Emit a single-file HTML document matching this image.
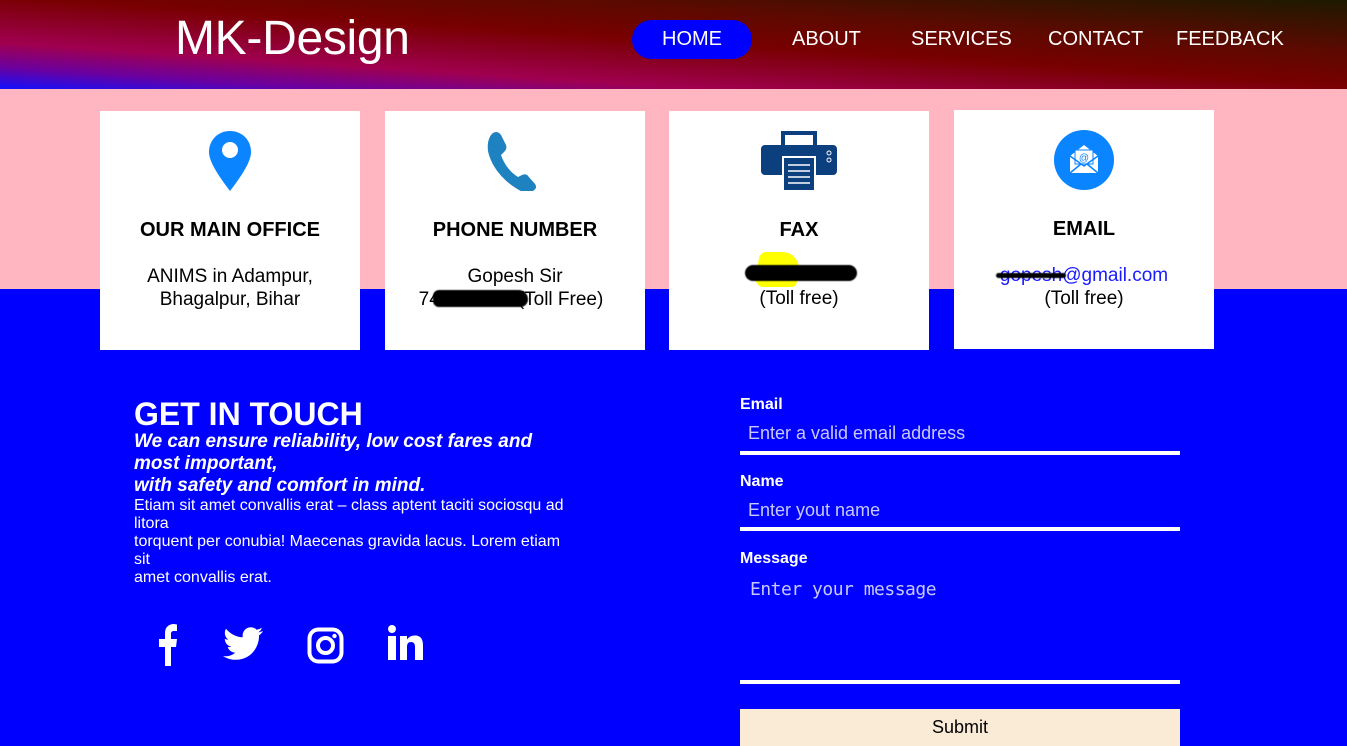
<!DOCTYPE html>
<html><head><meta charset="utf-8"><style>
*{margin:0;padding:0;box-sizing:border-box}
html,body{width:1347px;height:746px;overflow:hidden;font-family:"Liberation Sans",Arial,sans-serif}
body{background:#0000ff;position:relative}
.hdr{position:absolute;left:0;top:0;width:1347px;height:89px;background:linear-gradient(to top right,#1010ff 0%,#6a00a0 12%,#a0004f 26%,#780000 52%,#5a0a00 72%,#1c1a00 100%)}
.logo{position:absolute;left:175px;top:11px;color:#fff;font-size:48px;letter-spacing:-0.3px}
.nav a{position:absolute;top:28px;color:#fff;font-size:20px;text-decoration:none;line-height:22px}
.home{left:632px!important;top:20px!important;width:120px;height:39px;background:#00f;border-radius:20px;text-align:center;line-height:39px!important}
.pink{position:absolute;left:0;top:89px;width:1347px;height:200px;background:#ffb6c1}
.card{position:absolute;top:111px;width:260px;height:239px;background:#fff;text-align:center;color:#000}
.card h3{position:absolute;top:108px;width:100%;font-size:20px;font-weight:bold}
.card p{position:absolute;top:154px;width:100%;font-size:19px;line-height:23px}
.card svg{position:absolute;left:50%;transform:translateX(-50%);top:19px}
.scrib{position:absolute;background:#000;border-radius:10px;filter:blur(.6px)}
.git{position:absolute;left:134px;top:397px;color:#fff}
.git h2{font-size:32px;font-weight:bold;line-height:34px}
.git .it{font-size:19px;font-weight:bold;font-style:italic;line-height:22px;width:440px}
.git .sm{font-size:16px;line-height:18px;width:440px}
.lbl{position:absolute;left:740px;color:#fff;font-weight:bold;font-size:16px}
.ph{position:absolute;left:748px;color:#c8c8ff;font-size:18px}
.line{position:absolute;left:740px;width:440px;height:4px;background:#fff}
.sub{position:absolute;left:740px;top:709px;width:440px;height:40px;background:#faebd7;text-align:center;font-size:18px;line-height:36px;color:#000}
</style></head><body>
<div class="hdr"></div>
<div class="logo">MK-Design</div>
<div class="nav">
<a class="home">HOME</a>
<a style="left:792px">ABOUT</a>
<a style="left:911px">SERVICES</a>
<a style="left:1048px">CONTACT</a>
<a style="left:1176px">FEEDBACK</a>
</div>
<div class="pink"></div>

<div class="card" style="left:100px">
<svg width="44" height="60" viewBox="0 0 44 60" style="top:20px"><path d="M22 0C10 0 1 9 1 21c0 9 8 22 21 39C35 43 43 30 43 21 43 9 34 0 22 0z" fill="#0a84ff"/><circle cx="22" cy="19" r="8" fill="#fff"/></svg>
<h3>OUR MAIN OFFICE</h3>
<p>ANIMS in Adampur,<br>Bhagalpur, Bihar</p>
</div>

<div class="card" style="left:385px">
<svg width="60" height="60" viewBox="0 0 60 60" style="top:20px"><path d="M8 2c3-2 6-1 8 2l5 10c1 3 0 5-2 7l-3 3c3 9 9 17 17 22l4-2c2-1 5-1 6 1l7 8c2 3 1 5-2 7-4 3-9 2-14-1C18 50 6 35 3 20 2 12 4 5 8 2z" fill="#1e82c0"/></svg>
<h3>PHONE NUMBER</h3>
<p>Gopesh Sir<br><span style="margin-left:-8px">74</span><span style="display:inline-block;width:78px"></span>(Toll Free)</p>
<div class="scrib" style="left:48px;top:179px;width:95px;height:17px;border-radius:8px 12px 10px 8px"></div>
</div>

<div class="card" style="left:669px">
<svg width="76" height="60" viewBox="0 0 76 60" style="top:20px"><rect x="20" y="0" width="36" height="16" fill="#0c3f7d"/><rect x="24" y="4" width="28" height="12" fill="#fff"/><rect x="0" y="14" width="76" height="30" rx="4" fill="#0c3f7d"/><rect x="22" y="26" width="32" height="34" fill="#0c3f7d" stroke="#fff" stroke-width="2"/><path d="M27 34h22M27 40h22M27 46h22M27 52h22" stroke="#fff" stroke-width="1.5"/><circle cx="68" cy="22" r="2" fill="none" stroke="#fff"/><circle cx="68" cy="29" r="2" fill="none" stroke="#fff"/></svg>
<h3>FAX</h3>
<div style="position:absolute;left:88px;top:141px;width:42px;height:35px;background:#ff0;border-radius:6px 20px 4px 10px;transform:skew(-10deg)"></div>
<div class="scrib" style="left:76px;top:154px;width:112px;height:16px;border-radius:8px"></div>
<p style="top:176px">(Toll free)</p>
</div>

<div class="card" style="left:954px;top:110px">
<svg width="60" height="60" viewBox="0 0 60 60" style="top:20px"><circle cx="30" cy="30" r="30" fill="#0a84ff"/><path d="M16 26l14-11 14 11v17H16z" fill="#fff"/><rect x="21" y="20" width="18" height="14" fill="#fff" stroke="#0a84ff"/><text x="30" y="31" font-size="10" text-anchor="middle" fill="#0a84ff" font-family="Liberation Sans">@</text><path d="M16 26l14 10 14-10M16 43l11-9M44 43l-11-9" stroke="#0a84ff" fill="none" stroke-width="1.5"/></svg>
<h3>EMAIL</h3>
<p><span style="color:#1a1aff">gopesh@gmail.com</span><br>(Toll free)</p>
<div class="scrib" style="left:42px;top:163px;width:70px;height:5px"></div>
</div>

<div class="git">
<h2>GET IN TOUCH</h2>
<div class="it">We can ensure reliability, low cost fares and most important,<br>with safety and comfort in mind.</div>
<div class="sm">Etiam sit amet convallis erat – class aptent taciti sociosqu ad litora<br>torquent per conubia! Maecenas gravida lacus. Lorem etiam sit<br>amet convallis erat.</div>
</div>

<svg style="position:absolute;left:150px;top:624px" width="290" height="42" viewBox="0 0 290 42">
<path d="M15 42V23H9v-8h6V9c0-6 4-9 9-9l3 .5V7h-3c-3 0-3 2-3 3v5h6l-1 8h-5v19z" fill="#fff"/>
<path d="M113 9c-1.5.7-3 1-4.7 1.3 1.7-1 3-2.6 3.6-4.5-1.6 1-3.3 1.6-5.2 2A8.2 8.2 0 0092.8 15.3 23 23 0 0176 6.8a8.2 8.2 0 002.5 11c-1.3 0-2.6-.4-3.7-1 0 4 2.8 7.3 6.6 8-1.2.4-2.5.4-3.7.2 1 3.3 4.1 5.6 7.6 5.7A16.4 16.4 0 0173 34.1c3.7 2.3 8 3.7 12.6 3.7 15.1 0 23.4-12.6 23.4-23.4v-1c1.6-1.2 3-2.6 4-4.3z" fill="#fff" transform="translate(0,-2)"/>
<rect x="159.5" y="5.5" width="32" height="32" rx="9" fill="none" stroke="#fff" stroke-width="4"/><circle cx="175.5" cy="21.5" r="7.5" fill="none" stroke="#fff" stroke-width="4"/><circle cx="184.5" cy="12" r="2.2" fill="#fff"/>
<circle cx="242" cy="5" r="4" fill="#fff"/><rect x="238" y="12" width="8" height="24" fill="#fff"/><path d="M250 12h7v3.5c2-3 5-4 8-4 6 0 8 4 8 10V36h-8V23c0-3-1-5-4-5s-4 2-4 5v13h-7z" fill="#fff"/>
</svg>

<div class="lbl" style="top:396px">Email</div>
<div class="ph" style="top:423px">Enter a valid email address</div>
<div class="line" style="top:451px"></div>
<div class="lbl" style="top:473px">Name</div>
<div class="ph" style="top:500px">Enter yout name</div>
<div class="line" style="top:527px"></div>
<div class="lbl" style="top:550px">Message</div>
<div class="ph" style="top:579px;left:750px;font-family:'DejaVu Sans Mono','Liberation Mono',monospace;font-size:18px;letter-spacing:-.5px">Enter your message</div>
<div class="line" style="top:680px"></div>
<div class="sub">Submit</div>
</body></html>
